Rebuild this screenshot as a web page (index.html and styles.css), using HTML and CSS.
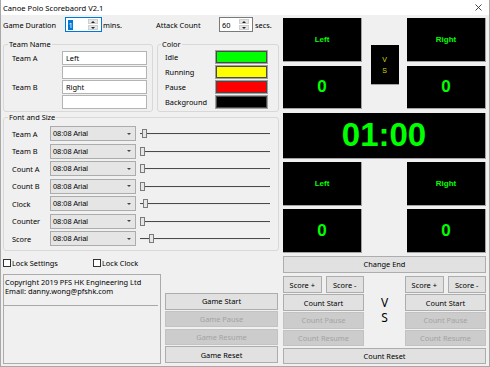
FILE: index.html
```html
<!DOCTYPE html>
<html lang="en">
<head>
<meta charset="utf-8">
<title>Canoe Polo Scorebaord V2.1</title>
<link rel="stylesheet" href="styles.css">
</head>
<body>
<div class="window">
  <div class="titlebar">
    <span class="title">Canoe Polo Scorebaord V2.1</span>
    <svg class="close" width="7" height="7" viewBox="0 0 7 7"><path d="M0.5 0.5L6.5 6.5M6.5 0.5L0.5 6.5" stroke="#333" stroke-width="0.9" fill="none"/></svg>
  </div>
  <div class="content">
    <div class="left">
      <div class="top-row">
        <span>Game Duration</span>
        <div class="spin focused"><span class="spin-val"><span class="sel">1</span></span><span class="spin-btns"><span class="sb"><i class="up"></i></span><span class="sb"><i class="down"></i></span></span></div>
        <span class="unit">mins.</span>
        <span>Attack Count</span>
        <div class="spin"><span class="spin-val">60</span><span class="spin-btns"><span class="sb"><i class="up"></i></span><span class="sb"><i class="down"></i></span></span></div>
        <span class="unit unit2">secs.</span>
      </div>

      <div class="groups">
        <fieldset class="group team">
          <legend>Team Name</legend>
          <div class="team-grid">
            <span class="tlbl">Team A</span><div class="tbox">Left</div>
            <span></span><div class="tbox"></div>
            <span class="tlbl">Team B</span><div class="tbox">Right</div>
            <span></span><div class="tbox"></div>
          </div>
        </fieldset>
        <fieldset class="group color">
          <legend>Color</legend>
          <div class="color-grid">
            <span>Idle</span><div class="swatch sw-green"></div>
            <span>Running</span><div class="swatch sw-yellow"></div>
            <span>Pause</span><div class="swatch sw-red"></div>
            <span>Background</span><div class="swatch sw-black"></div>
          </div>
        </fieldset>
      </div>

      <fieldset class="group font">
        <legend>Font and Size</legend>
        <div class="font-rows">
          <div class="frow"><span class="flbl">Team A</span><div class="combo"><span>08:08 Arial</span><i class="arrow"></i></div><div class="slider"><div class="track"></div><div class="thumb" style="left:2px"></div></div></div>
          <div class="frow"><span class="flbl">Team B</span><div class="combo"><span>08:08 Arial</span><i class="arrow"></i></div><div class="slider"><div class="track"></div><div class="thumb" style="left:0px"></div></div></div>
          <div class="frow"><span class="flbl">Count A</span><div class="combo"><span>08:08 Arial</span><i class="arrow"></i></div><div class="slider"><div class="track"></div><div class="thumb" style="left:0px"></div></div></div>
          <div class="frow"><span class="flbl">Count B</span><div class="combo"><span>08:08 Arial</span><i class="arrow"></i></div><div class="slider"><div class="track"></div><div class="thumb" style="left:0px"></div></div></div>
          <div class="frow"><span class="flbl">Clock</span><div class="combo"><span>08:08 Arial</span><i class="arrow"></i></div><div class="slider"><div class="track"></div><div class="thumb" style="left:3px"></div></div></div>
          <div class="frow"><span class="flbl">Counter</span><div class="combo"><span>08:08 Arial</span><i class="arrow"></i></div><div class="slider"><div class="track"></div><div class="thumb" style="left:0px"></div></div></div>
          <div class="frow"><span class="flbl">Score</span><div class="combo"><span>08:08 Arial</span><i class="arrow"></i></div><div class="slider"><div class="track"></div><div class="thumb" style="left:9px"></div></div></div>
        </div>
      </fieldset>

      <div class="checks">
        <label class="check check1"><span class="cbox"></span>Lock Settings</label>
        <label class="check"><span class="cbox"></span>Lock Clock</label>
      </div>

      <div class="bottom">
        <div class="info">
          <div class="info-text">Copyright 2019 PFS HK Engineering Ltd<br>Email: danny.wong@pfshk.com</div>
          <div class="info-rest"></div>
        </div>
        <div class="btn-col">
          <div class="btn">Game Start</div>
          <div class="btn disabled">Game Pause</div>
          <div class="btn disabled">Game Resume</div>
          <div class="btn">Game Reset</div>
        </div>
      </div>
    </div>

    <div class="right">
      <div class="board">
        <div class="panel name nameA1">Left</div>
        <div class="vsbox"><span>V</span><span>S</span></div>
        <div class="panel name nameB1">Right</div>
        <div class="panel score scoreA1">0</div>
        <div class="panel score scoreB1">0</div>
        <div class="panel clock">01:00</div>
        <div class="panel name nameA2">Left</div>
        <div class="panel name nameB2">Right</div>
        <div class="panel score scoreA2">0</div>
        <div class="panel score scoreB2">0</div>
      </div>

      <div class="btn change-end">Change End</div>

      <div class="ctrl-grid">
        <div class="pair pairA"><div class="btn">Score +</div><div class="btn">Score -</div></div>
        <div class="pair pairB"><div class="btn">Score +</div><div class="btn">Score -</div></div>
        <div class="btn cA1">Count Start</div>
        <div class="btn disabled cA2">Count Pause</div>
        <div class="btn disabled cA3">Count Resume</div>
        <div class="vs-big"><span>V</span><span>S</span></div>
        <div class="btn cB1">Count Start</div>
        <div class="btn disabled cB2">Count Pause</div>
        <div class="btn disabled cB3">Count Resume</div>
        <div class="btn count-reset">Count Reset</div>
      </div>
    </div>
  </div>
</div>
</body>
</html>
```

FILE: styles.css
```css
* { box-sizing: border-box; }

body {
  margin: 0;
  font-family: "Noto Sans", "Liberation Sans", sans-serif;
  font-size: 7.4px;
  color: #000;
}

.window {
  width: 490px;
  height: 367px;
  background: #f0f0f0;
  border: 1px solid #a8a8a8;
  border-top: none;
  display: flex;
  flex-direction: column;
  overflow: hidden;
}

.titlebar {
  height: 15px;
  flex: none;
  background: #fff;
  display: flex;
  align-items: center;
  justify-content: space-between;
  padding: 0 7px 0 2px;
}

.title { font-size: 7.6px; }

.content {
  display: flex;
  flex: 1;
}

/* ---------- left column ---------- */
.left {
  width: 278px;
  padding-left: 2px;
}

.top-row {
  display: grid;
  grid-template-columns: 62px 37px 54px 63px 34px auto;
  align-items: center;
  height: 15px;
  margin-top: 2px;
}

.unit { padding-left: 1px; }
.unit2 { padding-left: 2px; }

.spin {
  height: 15px;
  background: #fff;
  border: 1px solid #7a7a7a;
  display: flex;
  align-items: center;
  padding-left: 2px;
}
.spin.focused { border-color: #0078d7; }
.spin-val { flex: 1; }
.sel { background: #0078d7; color: #fff; padding: 0 0.5px; }

.spin-btns {
  width: 10px;
  height: 11px;
  margin-right: 3px;
  display: flex;
  flex-direction: column;
  gap: 1px;
}
.sb {
  flex: 1;
  background: #e6e6e6;
  border: 1px solid #cfcfcf;
  display: flex;
  align-items: center;
  justify-content: center;
}
.sb i { width: 0; height: 0; border-left: 2px solid transparent; border-right: 2px solid transparent; }
.sb .up { border-bottom: 2px solid #222; }
.sb .down { border-top: 2px solid #222; }

.groups {
  display: flex;
  gap: 4px;
  margin-top: 7px;
}

fieldset.group {
  margin: 0;
  border: 1px solid #d8d8d8;
  border-radius: 3px;
  min-width: 0;
}

legend {
  padding: 0 1px;
  margin-left: -4px;
  line-height: 10px;
  height: 10px;
  font-size: 7.4px;
}

.team {
  width: 150px;
  padding: 2px 4px 2px 8px;
}
.team-grid {
  display: grid;
  grid-template-columns: 50px 85px;
  grid-auto-rows: 13.5px;
  row-gap: 1.2px;
  align-items: center;
}
.tbox {
  height: 13.5px;
  background: #fff;
  border: 1px solid #b4b4b4;
  padding-left: 3px;
  display: flex;
  align-items: center;
}

.color {
  width: 122px;
  padding: 1px 4px 2px 7px;
}
.color-grid {
  display: grid;
  grid-template-columns: 50px 53px;
  grid-auto-rows: 14px;
  row-gap: 1px;
  align-items: center;
}
.swatch {
  height: 14px;
  border: 1px solid #a0a0a0;
  box-shadow: inset 0 0 0 1px #4a4a4a;
}
.sw-green { background: #00ff00; }
.sw-yellow { background: #ffff00; }
.sw-red { background: #ff0000; }
.sw-black { background: #000; }

.font {
  width: 276px;
  margin-top: 1px;
  padding: 4px 7px 4px 8px;
}
.font-rows {
  display: flex;
  flex-direction: column;
  gap: 2.5px;
}
.frow {
  height: 15px;
  display: flex;
  align-items: center;
}
.flbl { width: 38px; }
.combo {
  width: 86px;
  height: 15px;
  background: #e5e5e5;
  border: 1px solid #acacac;
  display: flex;
  align-items: center;
  justify-content: space-between;
  padding: 0 4px 0 2px;
  font-family: "Liberation Sans", Arial, sans-serif;
  font-size: 7.4px;
}
.arrow {
  width: 0;
  height: 0;
  border-left: 2px solid transparent;
  border-right: 2px solid transparent;
  border-top: 2.5px solid #444;
}
.slider {
  position: relative;
  width: 130px;
  height: 15px;
  margin-left: 4px;
  display: flex;
  align-items: center;
}
.track {
  flex: 1;
  height: 1px;
  background: #4a4a4a;
  box-shadow: 0 1px 0 #e8e8e8;
}
.thumb {
  position: absolute;
  top: 3px;
  width: 5px;
  height: 9px;
  background: #e6e6e6;
  border: 1px solid #7a7a7a;
}

.checks {
  display: flex;
  align-items: center;
  height: 14px;
  margin-top: 5px;
}
.check {
  display: flex;
  align-items: center;
}
.check1 { width: 90px; }
.cbox {
  width: 8px;
  height: 8px;
  background: #fff;
  border: 1px solid #333;
  margin-right: 1px;
}

.bottom {
  display: flex;
  gap: 4px;
  margin-top: 4px;
}
.info {
  width: 158px;
  height: 90px;
  border: 1px solid #ababab;
  display: flex;
  flex-direction: column;
}
.info-text {
  height: 31px;
  padding: 3px 0 0 1px;
  line-height: 9px;
  border-bottom: 1px solid #a8a8a8;
  margin-right: 2px;
}
.btn-col {
  width: 113px;
  padding-top: 19px;
  display: flex;
  flex-direction: column;
  gap: 1.25px;
}

.btn {
  height: 16.5px;
  background: #e1e1e1;
  border: 1px solid #adadad;
  display: flex;
  align-items: center;
  justify-content: center;
  white-space: nowrap;
}
.btn.disabled {
  background: #cccccc;
  border-color: #c2c2c2;
  color: #a3a3a3;
}

/* ---------- right column ---------- */
.right {
  width: 204px;
  margin-left: 4px;
}

.board {
  display: grid;
  grid-template-columns: 79px 45px 79px;
  grid-template-rows: 44px 43.5px 46px 43.5px 44px;
  row-gap: 3.5px;
  margin-top: 3px;
}

.panel {
  background: #000;
  border-right: 1px solid #a3a3a3;
  border-bottom: 1px solid #a3a3a3;
  display: flex;
  align-items: center;
  justify-content: center;
  color: #00ff00;
  font-family: "Liberation Sans", Arial, sans-serif;
  font-weight: bold;
}
.name { font-size: 8px; }
.score { font-size: 17px; }
.clock { font-size: 33px; grid-column: 1 / 4; grid-row: 3; }

.nameA1 { grid-column: 1; grid-row: 1; }
.nameB1 { grid-column: 3; grid-row: 1; }
.scoreA1 { grid-column: 1; grid-row: 2; }
.scoreB1 { grid-column: 3; grid-row: 2; }
.nameA2 { grid-column: 1; grid-row: 4; }
.nameB2 { grid-column: 3; grid-row: 4; }
.scoreA2 { grid-column: 1; grid-row: 5; }
.scoreB2 { grid-column: 3; grid-row: 5; }

.vsbox {
  grid-column: 2;
  grid-row: 1 / 3;
  align-self: start;
  justify-self: center;
  margin-top: 27px;
  width: 28px;
  height: 40px;
  background: #000;
  border-bottom: 1px solid #a3a3a3;
  display: flex;
  flex-direction: column;
  align-items: center;
  justify-content: center;
  color: #d8d800;
  font-family: "Liberation Sans", Arial, sans-serif;
  font-size: 7px;
  line-height: 11px;
}

.change-end {
  width: 203px;
  margin-top: 3px;
}

.ctrl-grid {
  display: grid;
  width: 203px;
  grid-template-columns: 81px 41px 81px;
  grid-template-rows: 17px 16.5px 16.5px 16.5px 16.5px;
  row-gap: 1.3px;
  margin-top: 3.5px;
}
.pair {
  display: flex;
  gap: 4px;
}
.pair .btn { flex: 1; height: 17px; }
.pairA { grid-column: 1; grid-row: 1; }
.pairB { grid-column: 3; grid-row: 1; }
.cA1 { grid-column: 1; grid-row: 2; }
.cA2 { grid-column: 1; grid-row: 3; }
.cA3 { grid-column: 1; grid-row: 4; }
.cB1 { grid-column: 3; grid-row: 2; }
.cB2 { grid-column: 3; grid-row: 3; }
.cB3 { grid-column: 3; grid-row: 4; }
.count-reset { grid-column: 1 / 4; grid-row: 5; }

.vs-big {
  grid-column: 2;
  grid-row: 2 / 5;
  display: flex;
  flex-direction: column;
  align-items: center;
  padding-top: 0.5px;
  font-size: 12px;
  line-height: 15.5px;
}
```
